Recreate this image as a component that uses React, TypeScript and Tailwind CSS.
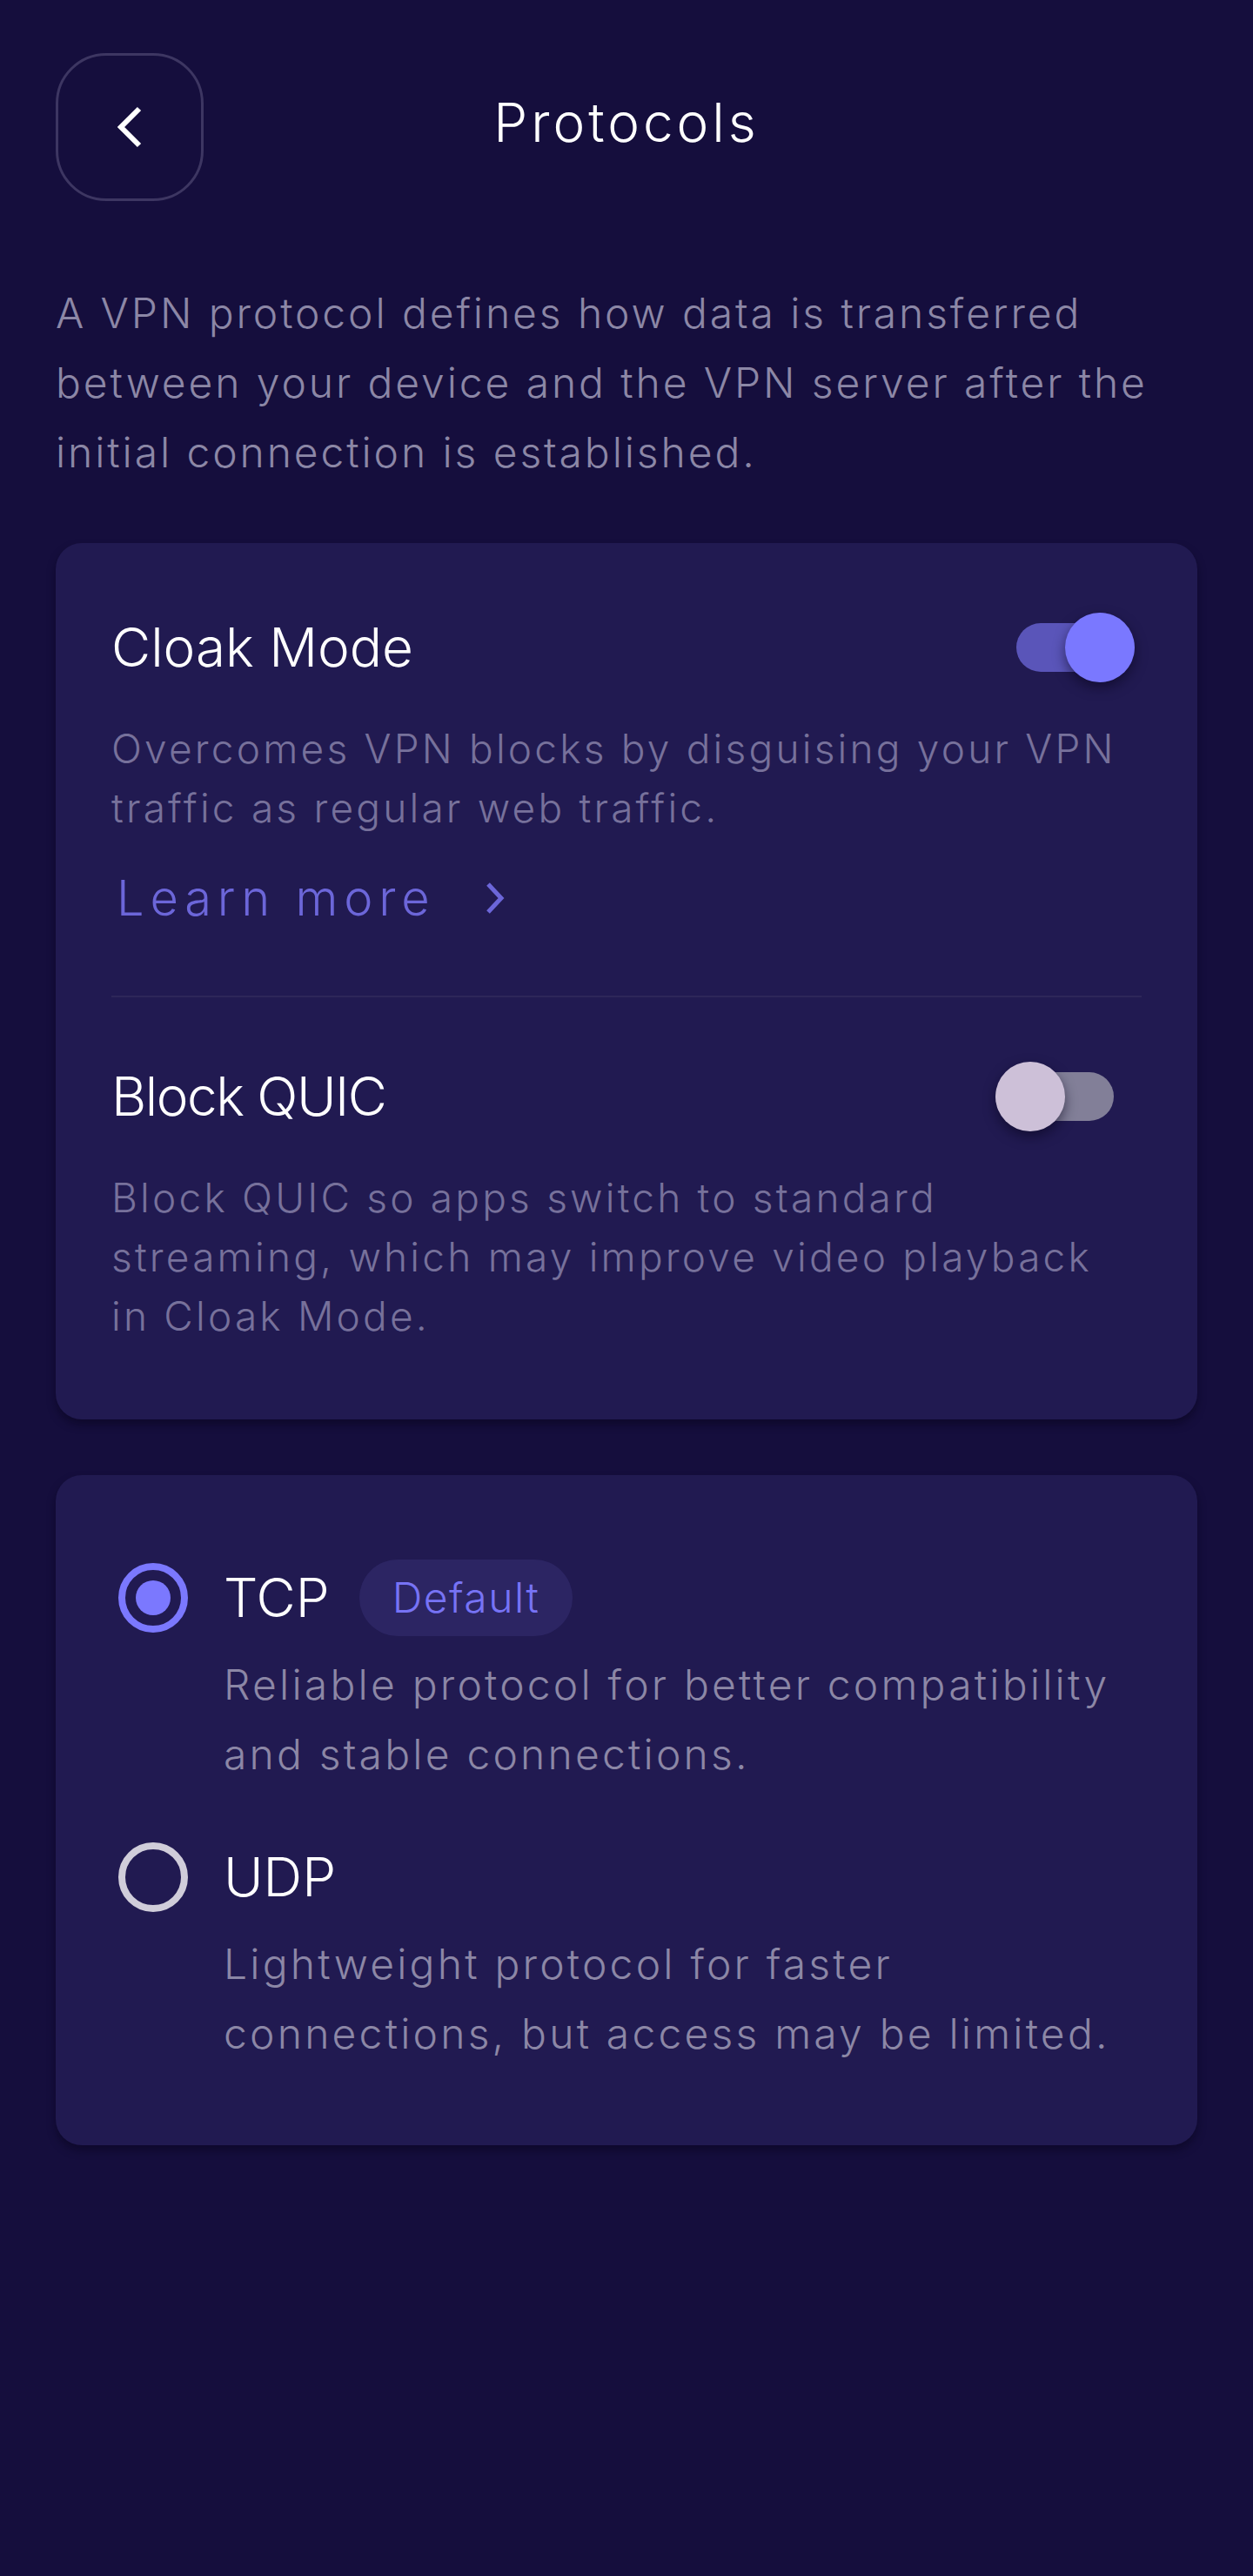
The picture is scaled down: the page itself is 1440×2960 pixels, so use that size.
import React from 'react';

const font = { fontFamily: 'Inter, "Noto Sans", sans-serif' };

// --- Switch ---
const Switch: React.FC<{ on: boolean }> = ({ on }) => (
  <div className="relative w-[160px] h-[80px] shrink-0">
    <div
      className={`absolute top-[12px] h-[56px] w-[136px] rounded-full ${
        on ? 'left-[24px] bg-[#5a55b9]' : 'left-0 bg-[#827f98]'
      }`}
    />
    <div
      className={`absolute top-0 h-[80px] w-[80px] rounded-full shadow-[0_6px_14px_rgba(10,6,30,0.55)] ${
        on ? 'left-[80px] bg-[#7a78ff]' : 'left-0 bg-[#cdc0d8]'
      }`}
    />
  </div>
);

// --- Radio ---
const Radio: React.FC<{ checked: boolean }> = ({ checked }) => (
  <div
    className={`flex h-[80px] w-[80px] shrink-0 items-center justify-center rounded-full border-[8px] ${
      checked ? 'border-[#7b78fe]' : 'border-[#d0cdda]'
    }`}
  >
    {checked && <div className="h-[40px] w-[40px] rounded-full bg-[#7b78fe]" />}
  </div>
);

const ProtocolOption: React.FC<{ name: string; desc: string; checked: boolean; badge?: string }> = ({
  name,
  desc,
  checked,
  badge,
}) => (
  <div>
    <div className="flex h-[88px] items-center">
      <Radio checked={checked} />
      <span className="ml-[41px] text-[62px] font-light leading-none text-white">{name}</span>
      {badge && (
        <span className="ml-[34px] flex h-[88px] items-center rounded-full bg-[#2c2563] px-[38px] text-[48px] font-light tracking-[1.5px] text-[#7773f5]">
          {badge}
        </span>
      )}
    </div>
    <p className="ml-[121px] mt-[16px] w-[1045px] text-[48px] font-light leading-[80px] tracking-[3.2px] text-[#8c87a6]">
      {desc}
    </p>
  </div>
);

export default function App() {
  return (
    <div className="min-h-[2960px] w-full bg-[#150e3d] px-[64px] pt-[61px]" style={font}>
      {/* header */}
      <div className="grid h-[170px] grid-cols-[170px_1fr_170px] items-center">
        <button className="flex h-[170px] w-[170px] items-center justify-center rounded-[58px] border-[3px] border-[#3d3662]">
          <svg width="30" height="48" viewBox="0 0 30 48" fill="none" stroke="white" strokeWidth="6">
            <path d="M26 3 L5 24 L26 45" />
          </svg>
        </button>
        <h1 className="-mt-[10px] text-center text-[62px] font-light leading-none tracking-[4px] text-white">
          Protocols
        </h1>
        <div />
      </div>

      <p className="mt-[89px] text-[48px] font-light leading-[80px] tracking-[2.9px] text-[#8c87a6]">
        A VPN protocol defines how data is transferred between your device and the VPN server after the initial
        connection is established.
      </p>

      {/* cloak card */}
      <div className="mt-[64px] rounded-[30px] bg-[#211a51] px-[64px] pb-[85px] pt-[80px] shadow-[0_6px_10px_rgba(8,4,28,0.5)]">
        <div className="flex h-[80px] items-center justify-between">
          <span className="text-[62px] font-light leading-none text-white">Cloak Mode</span>
          <div className="mr-[8px]">
            <Switch on={true} />
          </div>
        </div>
        <p className="mt-[42px] text-[46px] font-light leading-[68px] tracking-[3.2px] text-[#77719b]">
          Overcomes VPN blocks by disguising your VPN traffic as regular web traffic.
        </p>
        <div className="mt-[30px] flex h-[80px] items-center">
          <span className="ml-[6px] text-[56px] font-light tracking-[6.8px] text-[#6c66d9]">Learn more</span>
          <svg className="ml-[58px]" width="22" height="36" viewBox="0 0 22 36" fill="none" stroke="#6c66d9" strokeWidth="5">
            <path d="M3 2 L18 18 L3 34" />
          </svg>
        </div>
        <div className="mt-[72px] h-[2px] bg-[#2d2659]" />
        <div className="mt-[74px] flex h-[80px] items-center justify-between">
          <span className="text-[62px] font-light leading-none tracking-[-1.5px] text-white">Block QUIC</span>
          <div className="mr-[8px]">
            <Switch on={false} />
          </div>
        </div>
        <p className="mt-[42px] text-[46px] font-light leading-[68px] tracking-[3.2px] text-[#77719b]">
          Block QUIC so apps switch to standard streaming, which may improve video playback in Cloak Mode.
        </p>
      </div>

      {/* protocol card */}
      <div className="mt-[64px] rounded-[30px] bg-[#211a51] pb-[88px] pl-[72px] pr-[64px] pt-[97px] shadow-[0_6px_10px_rgba(8,4,28,0.5)]">
        <ProtocolOption
          name="TCP"
          badge="Default"
          checked={true}
          desc="Reliable protocol for better compatibility and stable connections."
        />
        <div className="mt-[57px]">
          <ProtocolOption
            name="UDP"
            checked={false}
            desc="Lightweight protocol for faster connections, but access may be limited."
          />
        </div>
      </div>
    </div>
  );
}
